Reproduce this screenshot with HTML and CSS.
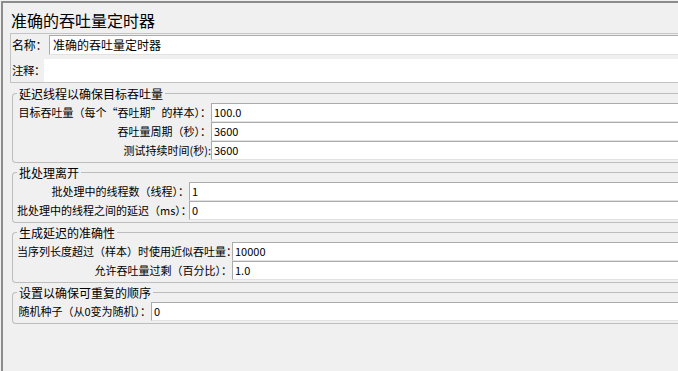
FILE: index.html
```html
<!DOCTYPE html>
<html lang="zh-CN">
<head>
    <meta charset="UTF-8">
    <title>准确的吞吐量定时器</title>
    <link rel="stylesheet" href="styles.css">
</head>
<body>
    <div class="window">
        <h1 class="title">准确的吞吐量定时器</h1>

        <div class="name-panel">
            <div class="name-row">
                <span class="name-label">名称：</span>
                <div class="field">准确的吞吐量定时器</div>
            </div>
            <div class="name-row">
                <span class="name-label short">注释：</span>
                <div class="field plain"></div>
            </div>
        </div>

        <fieldset class="group first">
            <legend>延迟线程以确保目标吞吐量</legend>
            <div class="rows" style="--label: 194px">
                <span class="label">目标吞吐量（每个“吞吐期”的样本）：</span>
                <div class="field">100.0</div>
                <span class="label">吞吐量周期（秒）：</span>
                <div class="field">3600</div>
                <span class="label">测试持续时间(秒):</span>
                <div class="field">3600</div>
            </div>
        </fieldset>

        <fieldset class="group">
            <legend>批处理离开</legend>
            <div class="rows" style="--label: 172px">
                <span class="label">批处理中的线程数（线程）：</span>
                <div class="field">1</div>
                <span class="label">批处理中的线程之间的延迟（ms）：</span>
                <div class="field">0</div>
            </div>
        </fieldset>

        <fieldset class="group">
            <legend>生成延迟的准确性</legend>
            <div class="rows" style="--label: 215px">
                <span class="label">当序列长度超过（样本）时使用近似吞吐量：</span>
                <div class="field">10000</div>
                <span class="label">允许吞吐量过剩（百分比）：</span>
                <div class="field">1.0</div>
            </div>
        </fieldset>

        <fieldset class="group">
            <legend>设置以确保可重复的顺序</legend>
            <div class="rows" style="--label: 134px">
                <span class="label">随机种子（从0变为随机）：</span>
                <div class="field">0</div>
            </div>
        </fieldset>
    </div>
</body>
</html>
```

FILE: styles.css
```css
html, body { margin: 0; height: 100%; overflow: hidden; }
body { background: #f0f0f0; font-family: "Noto Sans CJK SC", "Noto Sans", sans-serif; font-size: 11px; color: #000; }

.window { width: 720px; height: 368px; margin: 1px 0 0 1px; border-top: 2px solid #8c8c8c; border-left: 2px solid #8c8c8c; }

.title { margin: 0; padding: 6px 0 0 8px; font-size: 16px; line-height: 22px; font-weight: normal; }

.name-panel { margin: 2px 0 0 7px; padding: 1px 0 0 1px; border: 1px solid #c4c4c4; border-right: none; display: grid; grid-template-rows: 20px 23px; row-gap: 4px; }
.name-row { display: flex; align-items: stretch; }
.name-label { flex: none; width: 37px; line-height: 20px; font-size: 12px; white-space: nowrap; letter-spacing: -0.3px; }
.name-label.short { width: 32px; line-height: 23px; font-size: 11.5px; letter-spacing: -0.5px; }

.field { flex: 1; box-sizing: border-box; height: 19px; padding-left: 2px; line-height: 17px; background: #fff; border: 1px solid #ababab; border-right: none; border-bottom-color: #e2e2e2; white-space: nowrap; }
.name-row .field { height: 20px; line-height: 18px; font-size: 12px; padding-left: 3px; }
.name-row .field.plain { height: 23px; border: none; }

.group { margin: 3px 0 0 9px; padding: 3px 0 2px 4px; border: 1px solid #bdbdbd; border-right: none; border-radius: 4px 0 0 4px; min-width: 0; }
.group.first { margin-top: 4px; }
.group legend { margin-left: 0; padding: 0 2px; font-size: 12px; line-height: 13px; }

.rows { display: grid; grid-template-columns: var(--label) 1fr; grid-auto-rows: 19px; }
.label { text-align: right; line-height: 19px; white-space: nowrap; }
```
